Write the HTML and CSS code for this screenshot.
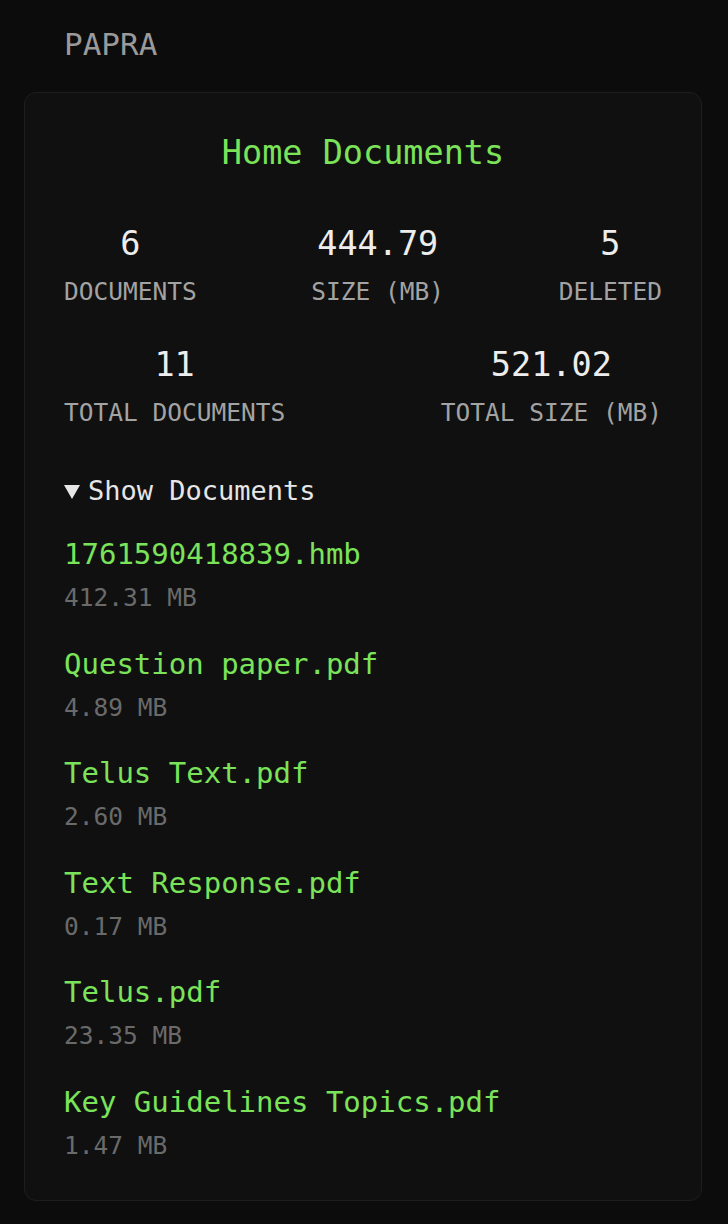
FILE: index.html
```html
<!DOCTYPE html>
<html lang="en">
<head>
<meta charset="utf-8">
<title>Papra</title>
<link rel="stylesheet" href="styles.css">
</head>
<body>
<header class="brand">PAPRA</header>
<main class="card">
  <h1 class="title">Home Documents</h1>
  <div class="stats">
    <div class="stat"><div class="num">6</div><div class="label">DOCUMENTS</div></div>
    <div class="stat"><div class="num">444.79</div><div class="label">SIZE (MB)</div></div>
    <div class="stat"><div class="num">5</div><div class="label">DELETED</div></div>
  </div>
  <div class="stats stats-second">
    <div class="stat"><div class="num">11</div><div class="label">TOTAL DOCUMENTS</div></div>
    <div class="stat"><div class="num">521.02</div><div class="label">TOTAL SIZE (MB)</div></div>
  </div>
  <div class="toggle">
    <svg class="caret" width="16" height="14" viewBox="0 0 16 14"><path d="M0 0H16L8 14Z" fill="currentColor"/></svg>
    <span>Show Documents</span>
  </div>
  <ul class="docs">
    <li class="doc"><div class="doc-name">1761590418839.hmb</div><div class="doc-size">412.31 MB</div></li>
    <li class="doc"><div class="doc-name">Question paper.pdf</div><div class="doc-size">4.89 MB</div></li>
    <li class="doc"><div class="doc-name">Telus Text.pdf</div><div class="doc-size">2.60 MB</div></li>
    <li class="doc"><div class="doc-name">Text Response.pdf</div><div class="doc-size">0.17 MB</div></li>
    <li class="doc"><div class="doc-name">Telus.pdf</div><div class="doc-size">23.35 MB</div></li>
    <li class="doc"><div class="doc-name">Key Guidelines Topics.pdf</div><div class="doc-size">1.47 MB</div></li>
  </ul>
</main>
</body>
</html>
```
FILE: styles.css
```css
* { box-sizing: border-box; }
html, body { margin: 0; padding: 0; }
body {
  background: #0c0c0c;
  font-family: "DejaVu Sans Mono", "Liberation Mono", monospace;
  color: #e8e8e8;
  width: 728px;
  min-height: 1224px;
}
.brand {
  padding: 24px 0 0 64px;
  height: 92px;
  font-size: 31px;
  line-height: 40px;
  color: #9a9a9a;
}
.card {
  margin: 0 26px 0 24px;
  background: #101010;
  border: 1px solid #1e1e1e;
  border-radius: 12px;
  padding: 40px 39px 39px 39px;
}
.title {
  margin: 0;
  text-align: center;
  font-weight: normal;
  font-size: 33.5px;
  line-height: 40px;
  color: #7be35a;
}
.stats {
  display: flex;
  justify-content: space-between;
  margin-top: 51px;
}
.stats-second { margin-top: 38px; }
.stat { text-align: center; }
.num {
  font-size: 33.5px;
  line-height: 40px;
  color: #ededed;
}
.label {
  margin-top: 13px;
  font-size: 24.5px;
  line-height: 30px;
  color: #a3a3a3;
}
.toggle {
  margin-top: 47px;
  display: flex;
  align-items: center;
  gap: 8px;
  font-size: 27px;
  line-height: 32px;
  color: #e6e6e6;
}
.caret { display: block; color: #e6e6e6; margin-top: 2px; }
.docs {
  list-style: none;
  margin: 30px 0 0;
  padding: 0;
  display: flex;
  flex-direction: column;
  gap: 33.5px;
}
.doc-name {
  font-size: 29px;
  line-height: 34px;
  color: #7be35a;
}
.doc-size {
  margin-top: 12px;
  font-size: 24.5px;
  line-height: 30px;
  color: #6a6a6a;
}
```
